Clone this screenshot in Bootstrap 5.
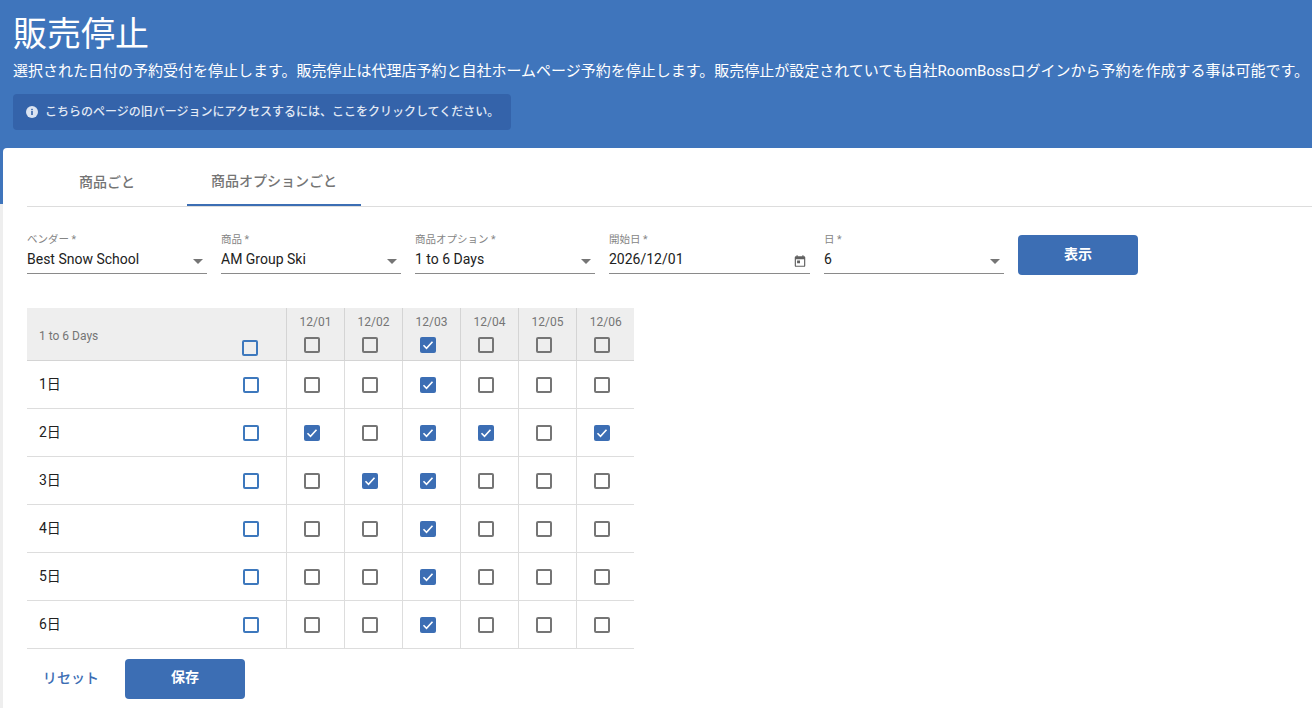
<!DOCTYPE html>
<html lang="ja">
<head>
<meta charset="utf-8">
<title>販売停止</title>
<link href="https://cdn.jsdelivr.net/npm/bootstrap@5.3.0/dist/css/bootstrap.min.css" rel="stylesheet">
<style>
html,body{height:708px;overflow:hidden}
body{font-family:Roboto,"Noto Sans CJK JP",sans-serif;background:#eee;color:#212121;font-size:14px}
.hero{background:#3f75bc;color:#fff;height:204px;padding:14px 0 0 13px;margin-bottom:-56px}
.hero h1{font-size:34px;line-height:40px;margin:0;font-weight:400}
.hero-desc{font-size:15px;line-height:20px;margin:7px 0 13px;white-space:nowrap}
.hero-note{width:498px;height:36px;background:#3463aa;border-radius:4px;padding:0 13px;font-size:12px;font-weight:500;color:#e3eaf5;gap:7px;white-space:nowrap}
.hero-note svg{flex:none}
.sheet{position:relative;margin-left:3px;background:#fff;border-radius:4px 0 0 0;height:560px;padding-top:7px}
.tabs-row{height:52px;margin-left:24px;border-bottom:1px solid #ddd}
.tab-item{height:51px;color:#757575;font-size:14px;font-weight:500;background:none;border:0;padding:3px 24px 0;display:flex;align-items:center;justify-content:center}
.tab-first{width:160px}
.tab-on{width:174px;border-bottom:2px solid #3c6eb4}
.filter-row{margin:28px 0 0 24px;gap:14px}
.fld{width:180px}
.fld-date{width:201px}
.fld label{display:block;font-size:10.5px;line-height:12px;color:#858585;margin-bottom:2px;height:13px;margin-top:-1px}
.fld .form-select,.fld .form-control{height:25px;border:0;border-bottom:1px solid #8a8a8a;border-radius:0;padding:0 24px 5px 0;font-size:14px;line-height:20px;color:#212121;background-color:transparent;box-shadow:none}
.fld .form-select{background-image:url("data:image/svg+xml,%3csvg xmlns='http://www.w3.org/2000/svg' width='10' height='5'%3e%3cpath d='M0 0h10L5 5z' fill='%23757575'/%3e%3c/svg%3e");background-size:10px 5px;background-position:right 4px center}
.fld .form-control{background-image:url("data:image/svg+xml,%3csvg xmlns='http://www.w3.org/2000/svg' viewBox='0 0 24 24' width='14' height='14'%3e%3cpath fill='%23616161' d='M19 4h-1V2h-2v2H8V2H6v2H5a2 2 0 0 0-2 2v14a2 2 0 0 0 2 2h14a2 2 0 0 0 2-2V6a2 2 0 0 0-2-2zm0 16H5V9h14v11zM7 11h5v5H7z'/%3e%3c/svg%3e");background-repeat:no-repeat;background-size:14px 14px;background-position:right 3px center}
.act-btn{width:120px;height:40px;background:#3c6eb4;border:0;border-radius:4px;color:#fff;font-size:14px;font-weight:700;padding:0 0 2px}
.act-btn:hover{background:#3c6eb4;color:#fff}
.stop-grid{table-layout:fixed;width:607px;margin:33px 0 0 24px;border-collapse:collapse;font-size:14px}
.stop-grid th,.stop-grid td{padding:0;text-align:center;vertical-align:middle;border-bottom:1px solid #ddd;height:48px}
.stop-grid thead th{background:#eee;height:52px;font-size:12px;font-weight:400;color:#757575;border-bottom-color:#d4d4d4}
.stop-grid .day-col{border-left:1px solid #ddd;width:58px}
.stop-grid thead .day-col{border-left-color:#d4d4d4;vertical-align:top;padding:7px 0 0 1px;line-height:14px}
.stop-grid .name-col{width:259px;text-align:left;position:relative;padding-left:12px}
.stop-grid thead .name-col{padding-top:5px}
.stop-grid .all-box{position:absolute;right:27px;top:calc(50% + 1px);transform:translateY(-50%)}
.stop-grid thead .all-box{top:32px;transform:none;right:28px}
.stop-grid .form-check-input{width:16px;height:16px;margin:0;border:2px solid #757575;border-radius:2px;float:none;display:block;box-shadow:none;--bs-form-check-bg:transparent}
.stop-grid .day-col .form-check-input{margin:2px 0 0 17px}
.stop-grid thead .day-col .form-check-input{margin:8px 0 0 16px}
.stop-grid .form-check-input:checked{background-color:#3c6eb4;border:0;background-image:url("data:image/svg+xml,%3csvg xmlns='http://www.w3.org/2000/svg' viewBox='0 0 16 16'%3e%3cpath fill='none' stroke='%23fff' stroke-width='1.6' d='M3.5 8.3l3 3 6-6.6'/%3e%3c/svg%3e");background-size:16px 16px}
.stop-grid .all-box.form-check-input{border-color:#3d78bd}
.foot-row{margin:10px 0 0 24px;gap:8px}
.link-act{width:90px;height:40px;background:none;border:0;color:#3c6eb4;font-size:14px;font-weight:500;letter-spacing:.1px;padding:0 2px 0 0}
</style>
</head>
<body>
<header class="hero">
  <h1>販売停止</h1>
  <p class="hero-desc">選択された日付の予約受付を停止します。販売停止は代理店予約と自社ホームページ予約を停止します。販売停止が設定されていても自社RoomBossログインから予約を作成する事は可能です。</p>
  <div class="hero-note d-flex align-items-center">
    <svg width="12" height="12" viewBox="0 0 12 12" aria-hidden="true"><circle cx="6" cy="6" r="6" fill="#dbe4f2"/><rect x="5.2" y="5" width="1.6" height="4" fill="#3463aa"/><rect x="5.2" y="2.8" width="1.6" height="1.4" fill="#3463aa"/></svg>
    <span>こちらのページの旧バージョンにアクセスするには、ここをクリックしてください。</span>
  </div>
</header>
<main class="sheet">
  <nav class="tabs-row d-flex">
    <button class="tab-item tab-first" type="button">商品ごと</button>
    <button class="tab-item tab-on" type="button">商品オプションごと</button>
  </nav>
  <form class="filter-row d-flex align-items-start">
    <div class="fld"><label>ベンダー *</label><select class="form-select"><option>Best Snow School</option></select></div>
    <div class="fld"><label>商品 *</label><select class="form-select"><option>AM Group Ski</option></select></div>
    <div class="fld"><label>商品オプション *</label><select class="form-select"><option>1 to 6 Days</option></select></div>
    <div class="fld fld-date"><label>開始日 *</label><input class="form-control" type="text" value="2026/12/01"></div>
    <div class="fld"><label>日 *</label><select class="form-select"><option>6</option></select></div>
    <button class="btn act-btn" type="button">表示</button>
  </form>
  <table class="stop-grid">
    <thead>
      <tr>
        <th class="name-col">1 to 6 Days<input class="form-check-input all-box" type="checkbox"></th>
        <th class="day-col">12/01<input class="form-check-input" type="checkbox"></th>
        <th class="day-col">12/02<input class="form-check-input" type="checkbox"></th>
        <th class="day-col">12/03<input class="form-check-input" type="checkbox" checked></th>
        <th class="day-col">12/04<input class="form-check-input" type="checkbox"></th>
        <th class="day-col">12/05<input class="form-check-input" type="checkbox"></th>
        <th class="day-col">12/06<input class="form-check-input" type="checkbox"></th>
      </tr>
    </thead>
    <tbody>
      <tr><td class="name-col">1日<input class="form-check-input all-box" type="checkbox"></td><td class="day-col"><input class="form-check-input" type="checkbox"></td><td class="day-col"><input class="form-check-input" type="checkbox"></td><td class="day-col"><input class="form-check-input" type="checkbox" checked></td><td class="day-col"><input class="form-check-input" type="checkbox"></td><td class="day-col"><input class="form-check-input" type="checkbox"></td><td class="day-col"><input class="form-check-input" type="checkbox"></td></tr>
      <tr><td class="name-col">2日<input class="form-check-input all-box" type="checkbox"></td><td class="day-col"><input class="form-check-input" type="checkbox" checked></td><td class="day-col"><input class="form-check-input" type="checkbox"></td><td class="day-col"><input class="form-check-input" type="checkbox" checked></td><td class="day-col"><input class="form-check-input" type="checkbox" checked></td><td class="day-col"><input class="form-check-input" type="checkbox"></td><td class="day-col"><input class="form-check-input" type="checkbox" checked></td></tr>
      <tr><td class="name-col">3日<input class="form-check-input all-box" type="checkbox"></td><td class="day-col"><input class="form-check-input" type="checkbox"></td><td class="day-col"><input class="form-check-input" type="checkbox" checked></td><td class="day-col"><input class="form-check-input" type="checkbox" checked></td><td class="day-col"><input class="form-check-input" type="checkbox"></td><td class="day-col"><input class="form-check-input" type="checkbox"></td><td class="day-col"><input class="form-check-input" type="checkbox"></td></tr>
      <tr><td class="name-col">4日<input class="form-check-input all-box" type="checkbox"></td><td class="day-col"><input class="form-check-input" type="checkbox"></td><td class="day-col"><input class="form-check-input" type="checkbox"></td><td class="day-col"><input class="form-check-input" type="checkbox" checked></td><td class="day-col"><input class="form-check-input" type="checkbox"></td><td class="day-col"><input class="form-check-input" type="checkbox"></td><td class="day-col"><input class="form-check-input" type="checkbox"></td></tr>
      <tr><td class="name-col">5日<input class="form-check-input all-box" type="checkbox"></td><td class="day-col"><input class="form-check-input" type="checkbox"></td><td class="day-col"><input class="form-check-input" type="checkbox"></td><td class="day-col"><input class="form-check-input" type="checkbox" checked></td><td class="day-col"><input class="form-check-input" type="checkbox"></td><td class="day-col"><input class="form-check-input" type="checkbox"></td><td class="day-col"><input class="form-check-input" type="checkbox"></td></tr>
      <tr><td class="name-col">6日<input class="form-check-input all-box" type="checkbox"></td><td class="day-col"><input class="form-check-input" type="checkbox"></td><td class="day-col"><input class="form-check-input" type="checkbox"></td><td class="day-col"><input class="form-check-input" type="checkbox" checked></td><td class="day-col"><input class="form-check-input" type="checkbox"></td><td class="day-col"><input class="form-check-input" type="checkbox"></td><td class="day-col"><input class="form-check-input" type="checkbox"></td></tr>
    </tbody>
  </table>
  <div class="foot-row d-flex">
    <button class="link-act" type="button">リセット</button>
    <button class="btn act-btn" type="button">保存</button>
  </div>
</main>
<script src="https://cdn.jsdelivr.net/npm/bootstrap@5.3.0/dist/js/bootstrap.bundle.min.js"></script>
</body>
</html>
